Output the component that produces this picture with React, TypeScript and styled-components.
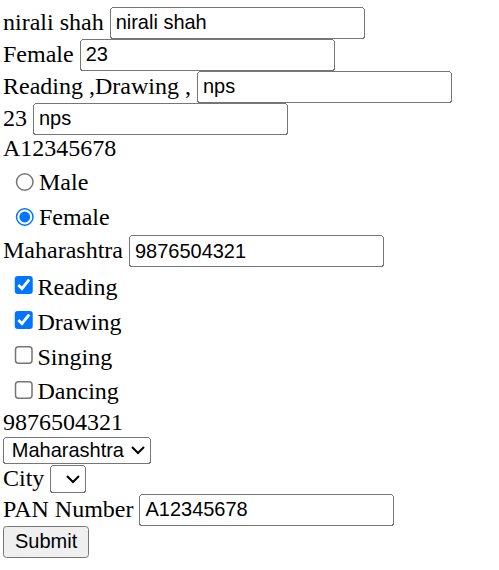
import styled, { createGlobalStyle } from "styled-components";

const GlobalStyle = createGlobalStyle`
  body {
    margin: 0;
    background: #ffffff;
    color: #000000;
    font-family: "Liberation Serif", "Times New Roman", serif;
    font-size: 16px;
  }
`;

// the whole form is shown at 150% like a zoomed browser tab
const Page = styled.form`
  zoom: 1.5;
  padding: 4.5px 0 0 2px;
`;

const Line = styled.div``;

const Group = styled.div<{ $top: number }>`
  margin-top: ${(p) => p.$top}px;
`;

const TextInput = styled.input`
  box-sizing: border-box;
  width: 170px;
  font-family: "Liberation Sans", Arial, sans-serif;
  font-size: 13.333px;
`;

const Option = styled.label`
  display: flex;
  align-items: center;
  height: 23.33px;
`;

const Radio = styled.input`
  margin: 0 3px 0 8px;
`;

const Check = styled.input`
  margin: 0 2.5px 2px 7.5px;
`;

const Select = styled.select`
  height: 18.5px;
  margin-bottom: 0.5px;
  padding: 0 1px 0 1.2px;
  font-family: "Liberation Sans", Arial, sans-serif;
  font-size: 13.333px;
`;

const SubmitButton = styled.button`
  font-family: "Liberation Sans", Arial, sans-serif;
  font-size: 13.333px;
`;

const hobbies = [
  { name: "Reading", checked: true },
  { name: "Drawing", checked: true },
  { name: "Singing", checked: false },
  { name: "Dancing", checked: false },
];

function App() {
  return (
    <>
      <GlobalStyle />
      <Page onSubmit={(e) => e.preventDefault()}>
        <Line>
          nirali shah <TextInput defaultValue="nirali shah" />
        </Line>
        <Line>
          Female <TextInput defaultValue="23" />
        </Line>
        <Line>
          Reading ,Drawing , <TextInput defaultValue="nps" />
        </Line>
        <Line>
          23 <TextInput defaultValue="nps" />
        </Line>
        <Line>A12345678</Line>
        <Group $top={2.3}>
          <Option>
            <Radio type="radio" name="gender" value="Male" />
            Male
          </Option>
          <Option>
            <Radio type="radio" name="gender" value="Female" defaultChecked />
            Female
          </Option>
        </Group>
        <Line>
          Maharashtra <TextInput defaultValue="9876504321" />
        </Line>
        <Group $top={1.6}>
          {hobbies.map((h) => (
            <Option key={h.name}>
              <Check type="checkbox" defaultChecked={h.checked} />
              {h.name}
            </Option>
          ))}
        </Group>
        <Line>9876504321</Line>
        <Line>
          <Select defaultValue="Maharashtra">
            <option>Maharashtra</option>
          </Select>
        </Line>
        <Line>
          City <Select />
        </Line>
        <Line>
          PAN Number <TextInput defaultValue="A12345678" />
        </Line>
        <SubmitButton type="submit">Submit</SubmitButton>
      </Page>
    </>
  );
}

export default App;
